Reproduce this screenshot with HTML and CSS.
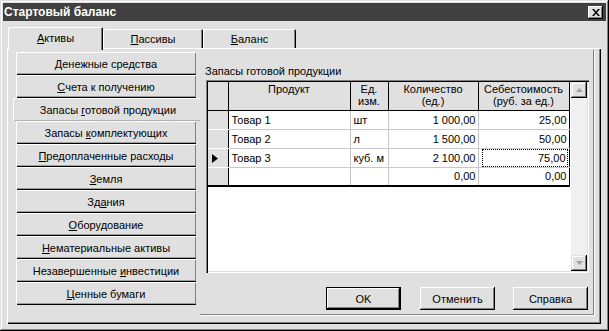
FILE: index.html
```html
<!DOCTYPE html>
<html lang="ru">
  <head>
    <meta charset="UTF-8" />
    <title>Стартовый баланс</title>
    <link rel="stylesheet" href="styles.css">
  </head>
  <body>
    <div class="window">
      <div class="titlebar">
        <span class="title">Стартовый баланс</span>
        <div class="close">
          <svg width="8" height="7" viewBox="0 0 8 7">
            <path d="M0 0h2l2 2.5 2-2.5h2l-3 3.5 3 3.5h-2l-2-2.5-2 2.5h-2l3-3.5z" fill="#000" />
          </svg>
        </div>
      </div>

      <!-- Tabs -->
      <div class="tabs">
        <div class="tab active" style="width: 95px"><span><u>А</u>ктивы</span></div>
        <div class="tab" style="width: 100px"><span><u>П</u>ассивы</span></div>
        <div class="tab" style="width: 93px"><span><u>Б</u>аланс</span></div>
      </div>

      <div class="page">
        <!-- Asset list -->
        <div class="side">
          <div class="side-btn"><span><u>Д</u>енежные средства</span></div>
          <div class="side-btn"><span><u>С</u>чета к получению</span></div>
          <div class="side-btn selected"><span>Запасы <u>г</u>отовой продукции</span></div>
          <div class="side-btn"><span>Запасы <u>к</u>омплектующих</span></div>
          <div class="side-btn"><span><u>П</u>редоплаченные расходы</span></div>
          <div class="side-btn"><span><u>З</u>емля</span></div>
          <div class="side-btn"><span>Зд<u>а</u>ния</span></div>
          <div class="side-btn"><span><u>О</u>борудование</span></div>
          <div class="side-btn"><span><u>Н</u>ематериальные активы</span></div>
          <div class="side-btn"><span>Незавершенные <u>и</u>нвестиции</span></div>
          <div class="side-btn"><span><u>Ц</u>енные бумаги</span></div>
        </div>

        <!-- Grid -->
        <div class="main">
          <div class="caption">Запасы готовой продукции</div>
          <div class="grid-box">
            <div class="grid-area">
              <table class="grid">
                <colgroup>
                  <col style="width: 20px" />
                  <col style="width: 122px" />
                  <col style="width: 38px" />
                  <col style="width: 90px" />
                  <col style="width: 91px" />
                </colgroup>
                <tr class="head">
                  <th class="ind"></th>
                  <th>Продукт</th>
                  <th>Ед.<br />изм.</th>
                  <th>Количество<br />(ед.)</th>
                  <th>Себестоимость<br />(руб. за ед.)</th>
                </tr>
                <tr>
                  <td class="ind"></td>
                  <td>Товар 1</td>
                  <td>шт</td>
                  <td class="num">1 000,00</td>
                  <td class="num">25,00</td>
                </tr>
                <tr>
                  <td class="ind"></td>
                  <td>Товар 2</td>
                  <td>л</td>
                  <td class="num">1 500,00</td>
                  <td class="num">50,00</td>
                </tr>
                <tr>
                  <td class="ind">
                    <svg width="6" height="9" viewBox="0 0 6 9"><path d="M0 0l6 4.5-6 4.5z" fill="#000" /></svg>
                  </td>
                  <td>Товар 3</td>
                  <td>куб. м</td>
                  <td class="num">2 100,00</td>
                  <td class="num"><span class="focus">75,00</span></td>
                </tr>
                <tr class="last">
                  <td class="ind"></td>
                  <td></td>
                  <td></td>
                  <td class="num">0,00</td>
                  <td class="num">0,00</td>
                </tr>
              </table>
            </div>
            <div class="scrollbar">
              <div class="sb-btn">
                <svg width="7" height="4" viewBox="0 0 7 4"><path d="M3.5 0l3.5 4h-7z" fill="#a0a0a0" /></svg>
              </div>
              <div class="sb-track"></div>
              <div class="sb-btn">
                <svg width="7" height="4" viewBox="0 0 7 4"><path d="M0 0h7l-3.5 4z" fill="#a0a0a0" /></svg>
              </div>
            </div>
          </div>

          <div class="actions">
            <div class="btn default">OK</div>
            <div class="btn">Отменить</div>
            <div class="btn">Справка</div>
          </div>
        </div>
      </div>
    </div>
  </body>
</html>
```

FILE: styles.css
```css
* {
  box-sizing: border-box;
}
body {
  margin: 0;
  font-family: "Liberation Sans", Arial, sans-serif;
  font-size: 11px;
  color: #000;
  background: #e0e0e0;
}
u {
  text-decoration: underline;
  text-underline-offset: 1px;
}
.window {
  width: 609px;
  height: 331px;
  padding: 3px;
  background: #e0e0e0;
  display: flex;
  flex-direction: column;
  box-shadow: inset -1px -1px #000, inset 1px 1px #e0e0e0,
    inset -2px -2px #808080, inset 2px 2px #fff;
}
.titlebar {
  height: 18px;
  flex: none;
  background: #404040;
  color: #fff;
  display: flex;
  align-items: center;
  justify-content: space-between;
  padding: 0 3px 0 1px;
}
.title {
  font-weight: bold;
  font-size: 12px;
}
.close {
  width: 15px;
  height: 13px;
  background: #e0e0e0;
  display: flex;
  align-items: center;
  justify-content: center;
  box-shadow: inset -1px -1px #000, inset 1px 1px #fff,
    inset -2px -2px #808080;
}
.tabs {
  height: 27px;
  flex: none;
  display: flex;
  align-items: flex-end;
  padding-left: 5px;
}
.tab {
  height: 19px;
  display: flex;
  align-items: center;
  justify-content: center;
  padding-top: 1px;
  border-radius: 2px 2px 0 0;
  box-shadow: inset 1px 1px #fff, inset -1px 0 #000, inset -2px 0 #808080;
}
.tab.active {
  height: 23px;
  margin-bottom: -2px;
  padding-bottom: 3px;
  background: #e0e0e0;
  position: relative;
  z-index: 1;
}
.page {
  flex: 1;
  margin: 0 5px 4px 4px;
  padding: 2px;
  display: flex;
  align-items: flex-start;
  box-shadow: inset 1px 1px #fff, inset -1px -1px #000,
    inset -2px -2px #808080;
}
.side {
  width: 191px;
  flex: none;
  padding-top: 2px;
  display: flex;
  flex-direction: column;
}
.side-btn {
  width: 180px;
  height: 23px;
  margin-left: 7px;
  display: flex;
  align-items: center;
  justify-content: center;
  padding-top: 1px;
  box-shadow: inset 1px 1px #fff, inset 0 -1px #000, inset -1px 0 #808080,
    inset 0 -2px #a0a0a0;
}
.side-btn.selected {
  width: 187px;
  margin-left: 4px;
  padding-left: 3px;
  box-shadow: inset 1px 1px #fff, inset 0 -1px #b0b0b0;
}
.main {
  width: 394px;
  height: 265px;
  padding: 14px 6px 5px 5px;
  display: flex;
  flex-direction: column;
  box-shadow: inset -1px -1px #808080, 1px 1px #fff;
}
.caption {
  line-height: 14px;
  height: 14px;
  margin-bottom: 2px;
}
.grid-box {
  width: 383px;
  height: 193px;
  margin-left: 1px;
  padding: 2px;
  display: flex;
  box-shadow: inset 1px 1px #808080, inset 2px 2px #000, inset -1px -1px #fff,
    inset -2px -2px #e0e0e0;
}
.grid-area {
  width: 363px;
  background: #fff;
}
.grid {
  width: 361px;
  border-collapse: collapse;
  table-layout: fixed;
}
.grid th {
  height: 28px;
  padding: 1px 0 0;
  font-weight: normal;
  line-height: 12px;
  vertical-align: top;
  background: #e0e0e0;
  border-right: 1px solid #000;
  border-bottom: 1px solid #000;
}
.grid td {
  height: 19px;
  padding: 0 3px;
  white-space: nowrap;
  border-right: 1px solid #c8c8c8;
  border-bottom: 1px solid #c8c8c8;
}
.grid td:last-child {
  border-right: 1px solid #000;
}
.grid td.ind {
  background: #e0e0e0;
  border-right: 1px solid #000;
  border-bottom: 1px solid #fff;
  padding: 2px 0 0 4px;
}
.grid tr.last td {
  border-bottom: 2px solid #000;
}
.grid td.num {
  text-align: right;
  padding-right: 2px;
}
.focus {
  display: block;
  margin: 0 -1px 0 0;
  padding-right: 1px;
  line-height: 16px;
  border: 1px dotted #000;
}
.scrollbar {
  width: 16px;
  display: flex;
  flex-direction: column;
  background: #f0f0f0;
}
.sb-btn {
  height: 16px;
  background: #e0e0e0;
  display: flex;
  align-items: center;
  justify-content: center;
  box-shadow: inset -1px -1px #000, inset 1px 1px #e0e0e0,
    inset -2px -2px #808080, inset 2px 2px #fff;
}
.sb-track {
  flex: 1;
}
.actions {
  display: flex;
  justify-content: flex-end;
  gap: 18px;
  margin-top: 14px;
}
.btn {
  width: 75px;
  height: 23px;
  display: flex;
  align-items: center;
  justify-content: center;
  padding-top: 1px;
  box-shadow: inset -1px -1px #000, inset 1px 1px #fff,
    inset -2px -2px #808080;
}
.btn.default {
  width: 75px;
  margin-right: 1px;
  box-shadow: inset 0 0 0 1px #000, inset -2px -2px #000, inset 2px 2px #fff,
    inset -3px -3px #808080;
}
```
